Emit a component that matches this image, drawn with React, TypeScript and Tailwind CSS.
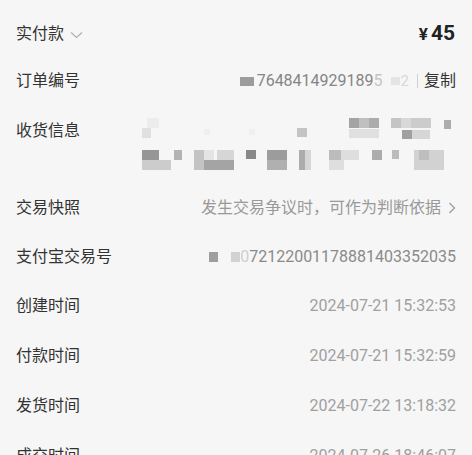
import React from "react";

const font = { fontFamily: 'Roboto, "Noto Sans CJK SC", sans-serif' };

type Block = [number, number, number, number, string];

// pixelated (mosaic) address
const mosaic: Block[] = [
  [5, 1, 12, 10, "#ececec"],
  [0, 11, 9, 10, "#e0e0e0"],
  [62, 12, 6, 6, "#efefef"],
  [107, 12, 6, 6, "#efefef"],
  [155, 11, 10, 9, "#c4c4c4"],
  [207, 1, 10, 10, "#a4a4a4"],
  [217, 1, 10, 10, "#c0c0c0"],
  [227, 1, 10, 10, "#acacac"],
  [207, 12, 30, 9, "#e0e0e0"],
  [249, 1, 10, 10, "#c4c4c4"],
  [259, 1, 10, 10, "#d8d8d8"],
  [269, 1, 20, 10, "#cccccc"],
  [260, 13, 10, 9, "#a0a0a0"],
  [270, 13, 18, 9, "#d6d6d6"],
  [302, 3, 7, 9, "#acacac"],

  [0, 33, 17, 10, "#969696"],
  [0, 43, 29, 10, "#cccccc"],
  [32, 33, 8, 10, "#b4b4b4"],
  [52, 33, 10, 20, "#c4c4c4"],
  [62, 33, 10, 10, "#e4e4e4"],
  [62, 43, 30, 10, "#a4a4a4"],
  [75, 33, 17, 10, "#d6d6d6"],
  [104, 33, 10, 9, "#888888"],
  [125, 33, 20, 10, "#9c9c9c"],
  [125, 43, 20, 10, "#b0b0b0"],
  [157, 33, 6, 20, "#acacac"],
  [163, 33, 6, 20, "#d6d6d6"],
  [187, 33, 12, 10, "#bcbcbc"],
  [199, 33, 18, 10, "#dedede"],
  [187, 43, 15, 10, "#dedede"],
  [230, 33, 10, 10, "#acacac"],
  [250, 33, 7, 9, "#bcbcbc"],
  [272, 33, 30, 20, "#d2d2d2"],
  [277, 33, 10, 10, "#bebebe"],
];

function Row({
  label,
  h,
  children,
}: {
  label: React.ReactNode;
  h: string;
  children?: React.ReactNode;
}) {
  return (
    <div className={`flex items-center justify-between px-[16px] ${h}`}>
      <div className="flex items-center text-[16px] text-[#333]">{label}</div>
      <div className="flex items-center">{children}</div>
    </div>
  );
}

function DateRow({ label, value }: { label: string; value: string }) {
  return (
    <Row label={label} h="h-[50px]">
      <span className="text-[16px] text-[#a0a0a0]">{value}</span>
    </Row>
  );
}

export default function App() {
  return (
    <div className="w-[472px] h-[455px] overflow-hidden bg-[#f6f6f6] pt-[10px]" style={font}>
      <Row
        h="h-[48px]"
        label={
          <>
            <span>实付款</span>
            <svg width="13" height="8" viewBox="0 0 13 8" className="ml-[6px] mt-[1px]">
              <path d="M1 1.5 L6.5 6.5 L12 1.5" fill="none" stroke="#b0b0b0" strokeWidth="1.2" />
            </svg>
          </>
        }
      >
        <div className="mr-[1px] flex items-baseline font-bold text-[#222]">
          <span className="mr-[3px] text-[17px]">¥</span>
          <span className="text-[21px]">45</span>
        </div>
      </Row>

      <Row label="订单编号" h="h-[46px]">
        <span className="mr-[3px] inline-block h-[9px] w-[14px] bg-[#9c9c9c]" />
        <span className="text-[16px] text-[#858585]">7648414929189</span>
        <span className="text-[16px] text-[#c4c4c4]">5</span>
        <span className="ml-[8px] inline-block h-[8px] w-[9px] bg-[#e4e4e4]" />
        <span className="ml-[1px] text-[15px] text-[#d8d8d8]">2</span>
        <span className="ml-[8px] inline-block h-[14px] w-px bg-[#d0d0d0]" />
        <span className="ml-[6px] text-[16px] text-[#333]">复制</span>
      </Row>

      <div className="flex h-[79px] justify-between px-[16px]">
        <span className="pt-[15px] text-[16px] leading-[24px] text-[#333]">收货信息</span>
        <svg width="314" height="56" viewBox="0 0 314 56" className="mt-[13px]">
          {mosaic.map(([x, y, w, hh, c], i) => (
            <rect key={i} x={x} y={y} width={w} height={hh} fill={c} />
          ))}
        </svg>
      </div>

      <Row label="交易快照" h="h-[50px]">
        <span className="text-[16px] text-[#999]">发生交易争议时，可作为判断依据</span>
        <svg width="8" height="12" viewBox="0 0 8 12" className="ml-[7px]">
          <path d="M1.5 1 L6.5 6 L1.5 11" fill="none" stroke="#999" strokeWidth="1.2" />
        </svg>
      </Row>

      <Row label="支付宝交易号" h="h-[48px]">
        <span className="mr-[13px] inline-block h-[10px] w-[9px] bg-[#9e9e9e]" />
        <span className="inline-block h-[10px] w-[9px] bg-[#d2d2d2]" />
        <span className="text-[16px] text-[#d0d0d0]">0</span>
        <span className="text-[16px] text-[#8a8a8a]">72122001178881403352035</span>
      </Row>

      <DateRow label="创建时间" value="2024-07-21 15:32:53" />
      <DateRow label="付款时间" value="2024-07-21 15:32:59" />
      <DateRow label="发货时间" value="2024-07-22 13:18:32" />
      <DateRow label="成交时间" value="2024-07-26 18:46:07" />
    </div>
  );
}
